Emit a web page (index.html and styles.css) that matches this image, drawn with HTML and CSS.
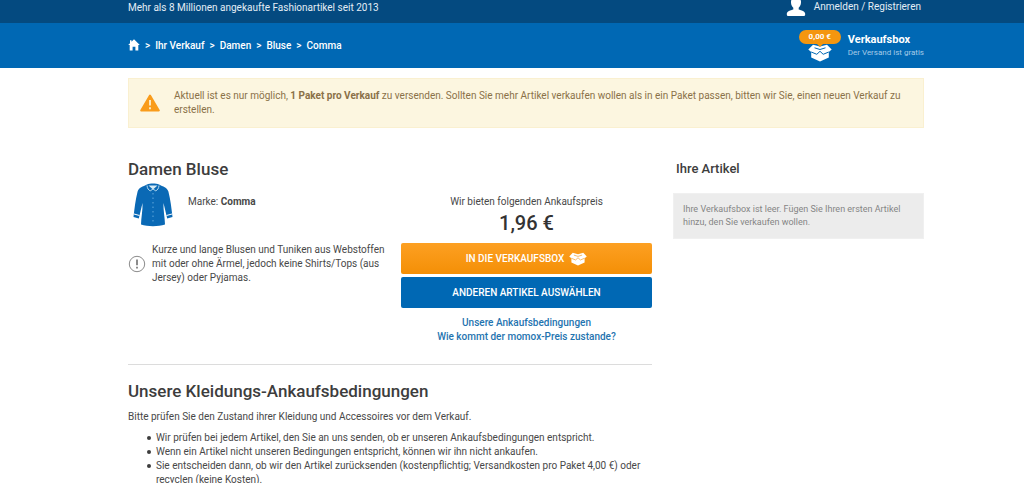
FILE: index.html
```
<!DOCTYPE html>
<html lang="de">
<head>
<meta charset="utf-8">
<title>Damen Bluse – Verkauf</title>
<link rel="stylesheet" href="styles.css">
</head>
<body>
<svg class="sprite" aria-hidden="true">
  <symbol id="box" viewBox="0 0 24 18">
    <path d="M5 .8 12 2.500 19 .8 23.700 5.500 20.800 8 20.800 13.500 12 17.500 3.200 13.500 3.200 8 .3 5.500Z" fill="currentColor" stroke="none"/>
    <path d="M6.500 3.800 12 5.500l5.500-1.700" fill="none" stroke-width="1"/>
    <path d="M3.200 8l5.600 2.300L12 7.300l3.200 3L20.800 8" fill="none" stroke-width="1"/>
  </symbol>
</svg>
<div class="topbar">
  <div class="wrap topbar-row">
    <span>Mehr als 8 Millionen angekaufte Fashionartikel seit 2013</span>
    <a class="login" href="#">
      <svg class="user-icon" viewBox="0 0 20 20" aria-hidden="true"><path d="M10 0c3.300 0 5.200 2.400 5 5.500-.1 2.300-1 4.200-2.300 5.300v1.700c2.700.8 6.500 1.600 6.500 4.500 0 1.600-.4 2-1.500 2H2.300c-1.100 0-1.500-.4-1.500-2 0-2.900 3.800-3.700 6.500-4.500v-1.700C6 9.700 5.100 7.800 5 5.500 4.800 2.400 6.700 0 10 0Z" fill="#fff"/></svg>
      <span>Anmelden / Registrieren</span>
    </a>
  </div>
</div>
<header class="header">
  <div class="wrap header-row">
    <nav class="crumbs" aria-label="Breadcrumb">
      <a href="#" aria-label="Startseite"><svg class="home-icon" viewBox="0 0 12 12" aria-hidden="true"><path d="M6 .3 11.800 6h-1.500v5.500H7.400V7.800H4.600v3.700H1.700V6H.2L2 4.200V1.300h1.500v1.500Z" fill="#fff"/></svg></a>
      <span>&gt;</span><a href="#">Ihr Verkauf</a>
      <span>&gt;</span><a href="#">Damen</a>
      <span>&gt;</span><a href="#">Bluse</a>
      <span>&gt;</span><a href="#">Comma</a>
    </nav>
    <a class="cart" href="#">
      <span class="cart-figure">
        <span class="cart-sum">0,00 €</span>
        <svg class="cart-box" aria-hidden="true"><use href="#box"/></svg>
      </span>
      <span class="cart-text"><b>Verkaufsbox</b><small>Der Versand ist gratis</small></span>
    </a>
  </div>
</header>
<div class="wrap">
  <div class="notice" role="note">
    <svg class="warn-icon" viewBox="0 0 20 18" aria-hidden="true"><path d="M10 1.500 18.800 16.500H1.200Z" fill="#f99c1b" stroke="#f99c1b" stroke-width="2" stroke-linejoin="round"/><path d="M10 6v5.500M10 13.300v2" stroke="#fdf0cf" stroke-width="1.800"/></svg>
    <p>Aktuell ist es nur möglich, <b>1 Paket pro Verkauf</b> zu versenden. Sollten Sie mehr Artikel verkaufen wollen als in ein Paket passen, bitten wir Sie, einen neuen Verkauf zu erstellen.</p>
  </div>
  <div class="columns">
    <main>
      <section class="product">
        <div>
          <h1>Damen Bluse</h1>
          <div class="brand">
            <svg class="shirt" viewBox="0 0 40 44" aria-hidden="true">
              <path d="M14 1.500C10 3.500 5.800 4.500 4.600 8.500 2.500 17 1.500 25 .5 34l5.300 1.500L9.500 20c.4 7-1.400 14.500-1.500 21.500C15 43.800 25 43.800 32 41.500c-.1-7-1.900-14.500-1.500-21.500l3.700 15.500 5.300-1.500c-1-9-2-17-4.100-25.500C34.200 4.500 30 3.500 26 1.500 23 .2 17 .2 14 1.500Z" fill="#0a69b5"/>
              <path d="M15.500 2.500h9L20 6.500Z" fill="#d9ecf5"/>
              <path d="M14 2.500c.2 3 1.700 4.800 3.300 5.300L20 6l2.700 1.800c1.600-.5 3.100-2.300 3.300-5.300" fill="none" stroke="#b9dcef"/>
              <path d="M1 31l5.500 1.500M39 31l-5.500 1.500" stroke="#fff"/>
              <path d="M20 10v31" stroke="#62a9dc" stroke-dasharray="1.500 3"/>
            </svg>
            <span>Marke: <b>Comma</b></span>
          </div>
          <div class="hint">
            <svg class="info-icon" viewBox="0 0 18 18" aria-hidden="true"><circle cx="9" cy="9" r="7.700" fill="none" stroke="#8b8b8b"/><path d="M9 4.500v5.700M9 11.800v1.700" stroke="#666" stroke-width="1.500"/></svg>
            <p>Kurze und lange Blusen und Tuniken aus Webstoffen mit oder ohne Ärmel, jedoch keine Shirts/Tops (aus Jersey) oder Pyjamas.</p>
          </div>
        </div>
        <div class="offer">
          <p>Wir bieten folgenden Ankaufspreis</p>
          <strong class="price">1,96 €</strong>
          <button class="btn btn-orange" type="button">IN DIE VERKAUFSBOX <svg class="btn-box" aria-hidden="true"><use href="#box"/></svg></button>
          <button class="btn btn-blue" type="button">ANDEREN ARTIKEL AUSWÄHLEN</button>
          <div class="links">
            <a href="#">Unsere Ankaufsbedingungen</a>
            <a href="#">Wie kommt der momox-Preis zustande?</a>
          </div>
        </div>
      </section>
      <section class="terms">
        <h2>Unsere Kleidungs-Ankaufsbedingungen</h2>
        <p>Bitte prüfen Sie den Zustand ihrer Kleidung und Accessoires vor dem Verkauf.</p>
        <ul>
          <li>Wir prüfen bei jedem Artikel, den Sie an uns senden, ob er unseren Ankaufsbedingungen entspricht.</li>
          <li>Wenn ein Artikel nicht unseren Bedingungen entspricht, können wir ihn nicht ankaufen.</li>
          <li>Sie entscheiden dann, ob wir den Artikel zurücksenden (kostenpflichtig; Versandkosten pro Paket 4,00 €) oder recyclen (keine Kosten).</li>
        </ul>
      </section>
    </main>
    <aside>
      <h3>Ihre Artikel</h3>
      <p class="empty">Ihre Verkaufsbox ist leer. Fügen Sie Ihren ersten Artikel hinzu, den Sie verkaufen wollen.</p>
    </aside>
  </div>
</div>
</body>
</html>
```
FILE: styles.css
```
* { box-sizing: border-box; }
body { margin: 0; background: #fff; color: #484848; font: 10px/14px Roboto, "Liberation Sans", sans-serif; }
h1, h2, h3, p, ul { margin: 0; }
a { color: inherit; text-decoration: none; }
svg { flex: none; }
b { font-weight: 700; }
.sprite { position: absolute; width: 0; height: 0; }
.wrap { padding: 0 100px 0 128px; }

.topbar { background: #044a80; color: #e3edf5; height: 23px; }
.topbar-row { display: flex; justify-content: space-between; }
.topbar-row > span { padding-top: 1px; }
.login { display: flex; gap: 8px; padding-right: 3px; }
.user-icon { width: 20px; height: 20px; margin-top: -3px; }

.header { background: #0068b4; color: #fff; }
.header-row { display: flex; justify-content: space-between; align-items: center; height: 45px; }
.crumbs { display: flex; gap: 5px; font-weight: 500; }
.home-icon { display: block; width: 12px; height: 12px; }
.cart { display: flex; gap: 7px; }
.cart-figure { display: flex; flex-direction: column; align-items: center; }
.cart-sum { position: relative; width: 42px; background: #f4960f; border-radius: 7px; text-align: center; font-size: 8px; font-weight: 700; line-height: 14px; }
.cart-sum::after { content: ""; position: absolute; top: 14px; left: 18px; border: 3px solid transparent; border-top-color: #f4960f; border-bottom: 0; }
.cart-box { width: 24px; height: 18px; stroke: #0068b4; }
.cart-text { display: flex; flex-direction: column; padding-top: 3px; }
.cart-text b { font-size: 11px; }
.cart-text small { font-size: 8px; line-height: 12px; color: #a5cbe8; }

.notice { display: flex; align-items: center; gap: 14px; margin-top: 10px; padding: 10px 11px; background: #fcf6e0; border: 1px solid #faf0d0; color: #8a7148; }
.notice p { padding-right: 8px; }
.warn-icon { width: 20px; height: 18px; }

.columns { display: grid; grid-template-columns: 524fr 251fr; gap: 21px; padding-top: 31px; }
h1, h2, h3 { font-weight: 500; color: #3d3d3d; }
h1, h2 { font-size: 17px; line-height: 20px; }
h3 { font-size: 13px; line-height: 20px; padding-left: 3px; }

.product { display: grid; grid-template-columns: 1fr 251px; gap: 21px; padding-bottom: 20px; border-bottom: 1px solid #dcdcdc; }
.brand { display: flex; gap: 15px; align-items: center; padding: 4px 0 0 5px; }
.brand span { padding-bottom: 6px; }
.shirt { width: 40px; height: 44px; }
.hint { display: flex; gap: 6px; align-items: center; padding-top: 16px; }
.hint p { margin-right: -12px; }
.info-icon { width: 18px; height: 18px; }
.offer { padding-top: 36px; text-align: center; }
.price { display: block; font-size: 20px; line-height: 28px; font-weight: 500; padding-bottom: 6px; color: #333; }
.btn { display: flex; width: 100%; height: 31px; align-items: center; justify-content: center; gap: 5px; border: 0; border-radius: 2px; color: #fff; font: 500 10px/14px Roboto, sans-serif; }
.btn-orange { background: linear-gradient(#fda022, #f48f06); stroke: #f5a437; }
.btn-blue { margin-top: 3px; background: #0068b4; }
.btn-box { width: 18px; height: 14px; }
.links { display: flex; flex-direction: column; padding-top: 8px; font-weight: 500; color: #1f74b0; }

.terms { padding-top: 16px; }
.terms p { padding-top: 9px; }
.terms ul { padding: 7px 0 0 28px; list-style: none; }
.terms li::before { content: ""; display: inline-block; width: 4px; height: 4px; margin: 0 5px 1px -9px; border-radius: 50%; background: #3d3d3d; }
.empty { margin-top: 14px; padding: 9px; background: #ececec; border: 1px solid #f0f0f0; color: #858585; font-size: 9px; line-height: 13px; }
```
